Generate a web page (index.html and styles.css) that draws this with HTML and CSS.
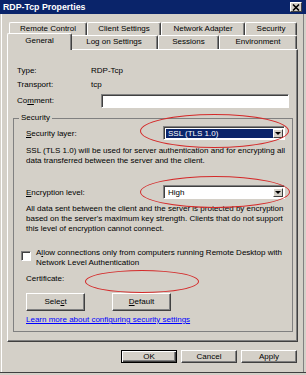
FILE: index.html
```html
<!DOCTYPE html>
<html lang="en">
<head>
<meta charset="UTF-8" />
<title>RDP-Tcp Properties</title>
<link rel="stylesheet" href="styles.css">
</head>
<body>
<div class="window">
  <!-- Заголовок окна -->
  <div class="titlebar">
    <span class="title">RDP-Tcp Properties</span>
    <span class="close">
      <svg width="8" height="7" viewBox="0 0 8 7"><path d="M1 0.5 L7 6.5 M7 0.5 L1 6.5" stroke="#000" stroke-width="1.6"/></svg>
    </span>
  </div>

  <div class="frame">
    <!-- Вкладки -->
    <div class="tabs">
      <div class="tabrow back">
        <div class="tab">Remote Control</div>
        <div class="tab">Client Settings</div>
        <div class="tab">Network Adapter</div>
        <div class="tab">Security</div>
      </div>
      <div class="tabrow front">
        <div class="tab active">General</div>
        <div class="tab">Log on Settings</div>
        <div class="tab">Sessions</div>
        <div class="tab">Environment</div>
      </div>
    </div>

    <!-- Содержимое вкладки General -->
    <div class="panel">
      <div class="field first"><span class="label">Type:</span><span>RDP-Tcp</span></div>
      <div class="field"><span class="label">Transport:</span><span>tcp</span></div>
      <div class="field comment"><span class="label">Co<u>m</u>ment:</span><span class="textbox"></span></div>

      <fieldset class="group">
        <legend>Security</legend>
        <div class="selectRow">
          <span class="selLabel"><u>S</u>ecurity layer:</span>
          <div class="select picked"><span class="selText">SSL (TLS 1.0)</span><span class="arrow"></span></div>
        </div>
        <p class="desc one">SSL (TLS 1.0) will be used for server authentication and for encrypting all<br>data transferred between the server and the client.</p>

        <div class="selectRow enc">
          <span class="selLabel"><u>E</u>ncryption level:</span>
          <div class="select"><span class="selText">High</span><span class="arrow"></span></div>
        </div>
        <p class="desc two">All data sent between the client and the server is protected by encryption<br>based on the server's maximum key strength. Clients that do not support<br>this level of encryption cannot connect.</p>

        <div class="checkRow">
          <span class="checkbox"></span>
          <span class="checkText">A<u>l</u>low connections only from computers running Remote Desktop with<br>Network Level Authentication</span>
        </div>

        <div class="cert">Certificate:</div>

        <div class="certButtons">
          <div class="btn wide">Sele<u>c</u>t</div>
          <div class="btn wide"><u>D</u>efault</div>
        </div>

        <a class="link" href="#">Learn more about configuring security settings</a>
      </fieldset>
    </div>

    <!-- Кнопки диалога -->
    <div class="dialogButtons">
      <div class="btn ok">OK</div>
      <div class="btn">Cancel</div>
      <div class="btn">Apply</div>
    </div>
  </div>

  <!-- Красные пометки поверх -->
  <div class="mark markLayer"></div>
  <div class="mark markLevel"></div>
  <div class="mark markCert"></div>
</div>
</body>
</html>
```

FILE: styles.css
```css
  body {
    margin: 0;
    background-color: #d4d0c8;
    font-family: "Liberation Sans", Arial, sans-serif;
    font-size: 8px;
    color: #000;
  }
  .window {
    position: relative;
    width: 306px;
    height: 373px;
    background-color: #d4d0c8;
    border-bottom: 1px solid #404040;
    box-sizing: border-box;
    overflow: hidden;
  }

  /* Заголовок */
  .titlebar {
    height: 14px;
    background-color: #0a246a;
    display: flex;
    align-items: center;
    justify-content: space-between;
    padding: 0 4px 0 3px;
  }
  .title {
    color: #fff;
    font-weight: bold;
    font-size: 8.8px;
  }
  .close {
    width: 12px;
    height: 10px;
    box-sizing: border-box;
    background: #d4d0c8;
    border: 1px solid;
    border-color: #fff #404040 #404040 #fff;
    display: flex;
    align-items: center;
    justify-content: center;
  }

  .frame {
    border-left: 1px solid #fff;
    border-right: 1px solid #808080;
    margin-left: 1px;
    margin-right: 2px;
    height: 358px;
  }

  /* Вкладки */
  .tabs { padding: 8px 0 0 7px; }
  .tabrow { display: flex; align-items: flex-end; }
  .tabrow.back { height: 13px; }
  .tabrow.front { height: 14px; position: relative; z-index: 1; }
  .tab {
    box-sizing: border-box;
    height: 100%;
    border: 1px solid;
    border-color: #fff #404040 transparent #fff;
    border-bottom: none;
    border-radius: 2px 2px 0 0;
    box-shadow: inset -1px 0 #808080;
    text-align: center;
    line-height: 12px;
    background: #d4d0c8;
  }
  .back .tab:nth-child(1) { width: 78px; }
  .back .tab:nth-child(2) { width: 74px; }
  .back .tab:nth-child(3) { width: 84px; }
  .back .tab:nth-child(4) { width: 52px; }
  .front .tab:nth-child(1) { width: 61px; }
  .front .tab:nth-child(2) { width: 88px; }
  .front .tab:nth-child(3) { width: 61px; }
  .front .tab:nth-child(4) { width: 78px; }
  .front .tab.active {
    width: 65px;
    height: 17px;
    margin: 0 -2px -1px -2px;
    line-height: 14px;
    position: relative;
    z-index: 2;
  }

  /* Панель вкладки */
  .panel {
    margin-left: 5px;
    width: 291px;
    height: 293px;
    box-sizing: border-box;
    border: 1px solid;
    border-color: #fff #404040 #404040 #fff;
    box-shadow: inset -1px -1px #808080;
    padding-left: 9px;
  }
  .field { display: flex; height: 12px; line-height: 12px; margin-top: 2px; }
  .field.first { margin-top: 15px; }
  .label { width: 74px; }
  .field.comment { height: 15px; align-items: center; }
  .field.comment .label { width: 84px; }
  .textbox {
    width: 188px;
    height: 14px;
    box-sizing: border-box;
    background: #fff;
    border: 1px solid;
    border-color: #808080 #fff #fff #808080;
    box-shadow: inset 1px 1px #404040;
  }

  /* Группа Security */
  .group {
    margin: 5px 0 0 -4px;
    width: 280px;
    box-sizing: border-box;
    padding: 3px 6px 6px 12px;
    border: 1px solid #808080;
  }
  .group legend {
    padding: 0 2px;
    margin-left: -7px;
    line-height: 10px;
  }
  .selectRow { display: flex; align-items: center; height: 14px; }
  .selectRow.enc { margin-top: 19px; }
  .selLabel { width: 137px; }
  .select {
    width: 122px;
    height: 14px;
    box-sizing: border-box;
    background: #fff;
    border: 1px solid;
    border-color: #808080 #fff #fff #808080;
    box-shadow: inset 1px 1px #404040;
    display: flex;
    padding: 2px 1px 1px 2px;
  }
  .selText { flex: 1; padding-left: 2px; line-height: 9px; }
  .select.picked .selText { background: #0a246a; color: #fff; }
  .arrow {
    width: 10px;
    box-sizing: border-box;
    background: #d4d0c8;
    border: 1px solid;
    border-color: #fff #404040 #404040 #fff;
    display: flex;
    align-items: center;
    justify-content: center;
  }
  .arrow::after {
    content: "";
    border-left: 3px solid transparent;
    border-right: 3px solid transparent;
    border-top: 3px solid #000;
  }
  .desc { margin: 6px 0 0; line-height: 10px; white-space: nowrap; }
  .desc.two { margin-top: 5px; }

  .checkRow { display: flex; margin: 14px 0 0 -5px; line-height: 10px; white-space: nowrap; }
  .checkbox {
    width: 10px;
    height: 10px;
    box-sizing: border-box;
    margin-top: 3px;
    background: #fff;
    border: 1px solid;
    border-color: #808080 #fff #fff #808080;
    box-shadow: inset 1px 1px #404040;
    flex: none;
  }
  .checkText { margin-left: 5px; }
  .cert { margin-top: 6px; line-height: 10px; }

  /* Кнопки */
  .btn {
    width: 56px;
    height: 13px;
    box-sizing: border-box;
    border: 1px solid;
    border-color: #fff #404040 #404040 #fff;
    box-shadow: inset -1px -1px #808080;
    text-align: center;
    line-height: 11px;
  }
  .certButtons { display: flex; gap: 27px; margin-top: 9px; }
  .btn.wide { width: 59px; height: 18px; line-height: 16px; }
  .link {
    display: block;
    margin-top: 4px;
    line-height: 10px;
    color: #0000ff;
  }
  .dialogButtons {
    display: flex;
    justify-content: flex-end;
    gap: 4px;
    margin: 8px 6px 0 0;
  }
  .btn.ok {
    border-color: #000;
    box-shadow: inset 1px 1px #fff, inset -1px -1px #404040, inset -2px -2px #808080;
  }

  /* Пометки */
  .mark {
    position: absolute;
    border: 1px solid #d42a2a;
    border-radius: 50%;
  }
  .markLayer { left: 140px; top: 114px; width: 147px; height: 32px; }
  .markLevel { left: 140px; top: 176px; width: 148px; height: 30px; }
  .markCert { left: 85px; top: 270px; width: 112px; height: 21px; }
```
